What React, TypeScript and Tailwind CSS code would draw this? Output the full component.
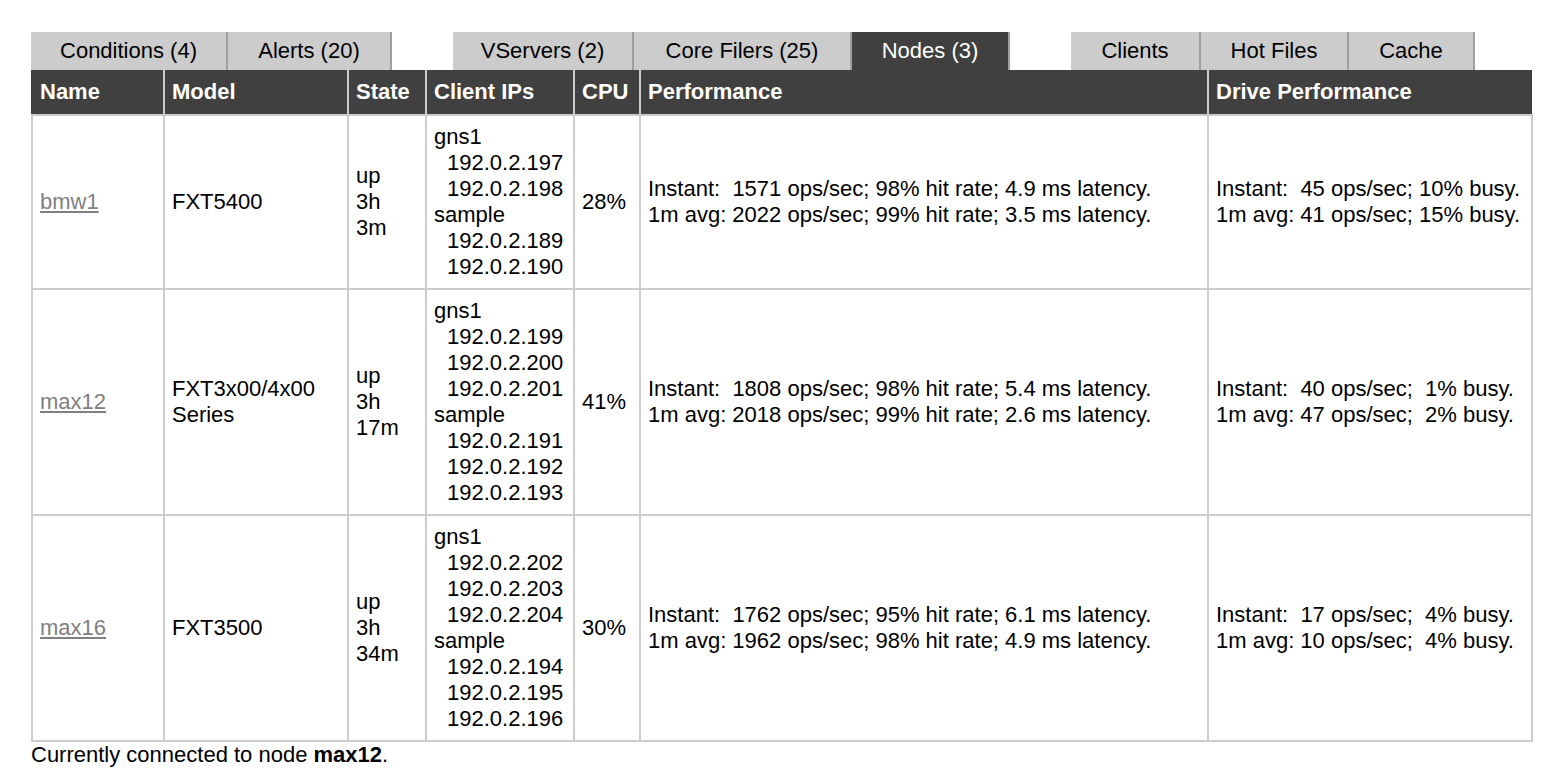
import React from 'react';

interface NodeRow {
  name: string;
  model: string[];
  state: string[];
  clients: { group: string; ips: string[] }[];
  cpu: string;
  perf: string[];
  drive: string[];
}

const TABS: { label: string; w: string; active?: boolean; gapBefore?: boolean }[] = [
  { label: 'Conditions (4)', w: 'w-[197px]' },
  { label: 'Alerts (20)', w: 'w-[164px]' },
  { label: 'VServers (2)', w: 'w-[181px]', gapBefore: true },
  { label: 'Core Filers (25)', w: 'w-[218px]' },
  { label: 'Nodes (3)', w: 'w-[158px]', active: true },
  { label: 'Clients', w: 'w-[130px]', gapBefore: true },
  { label: 'Hot Files', w: 'w-[148px]' },
  { label: 'Cache', w: 'w-[126px]' },
];

const NODES: NodeRow[] = [
  {
    name: 'bmw1',
    model: ['FXT5400'],
    state: ['up', '3h', '3m'],
    clients: [
      { group: 'gns1', ips: ['192.0.2.197', '192.0.2.198'] },
      { group: 'sample', ips: ['192.0.2.189', '192.0.2.190'] },
    ],
    cpu: '28%',
    perf: [
      'Instant:  1571 ops/sec; 98% hit rate; 4.9 ms latency.',
      '1m avg: 2022 ops/sec; 99% hit rate; 3.5 ms latency.',
    ],
    drive: ['Instant:  45 ops/sec; 10% busy.', '1m avg: 41 ops/sec; 15% busy.'],
  },
  {
    name: 'max12',
    model: ['FXT3x00/4x00', 'Series'],
    state: ['up', '3h', '17m'],
    clients: [
      { group: 'gns1', ips: ['192.0.2.199', '192.0.2.200', '192.0.2.201'] },
      { group: 'sample', ips: ['192.0.2.191', '192.0.2.192', '192.0.2.193'] },
    ],
    cpu: '41%',
    perf: [
      'Instant:  1808 ops/sec; 98% hit rate; 5.4 ms latency.',
      '1m avg: 2018 ops/sec; 99% hit rate; 2.6 ms latency.',
    ],
    drive: ['Instant:  40 ops/sec;  1% busy.', '1m avg: 47 ops/sec;  2% busy.'],
  },
  {
    name: 'max16',
    model: ['FXT3500'],
    state: ['up', '3h', '34m'],
    clients: [
      { group: 'gns1', ips: ['192.0.2.202', '192.0.2.203', '192.0.2.204'] },
      { group: 'sample', ips: ['192.0.2.194', '192.0.2.195', '192.0.2.196'] },
    ],
    cpu: '30%',
    perf: [
      'Instant:  1762 ops/sec; 95% hit rate; 6.1 ms latency.',
      '1m avg: 1962 ops/sec; 98% hit rate; 4.9 ms latency.',
    ],
    drive: ['Instant:  17 ops/sec;  4% busy.', '1m avg: 10 ops/sec;  4% busy.'],
  },
];

const HEADERS = ['Name', 'Model', 'State', 'Client IPs', 'CPU', 'Performance', 'Drive Performance'];
const COL_W = ['w-[132px]', 'w-[184px]', 'w-[78px]', 'w-[148px]', 'w-[66px]', 'w-[568px]', 'w-[324px]'];

const td = 'border-2 border-[#cccccc] px-[7px] py-[8px] align-middle whitespace-pre';

export default function App() {
  return (
    <div className="min-h-screen bg-white pl-[31px] pt-[32px] text-[22px] leading-[26px] text-black font-['Liberation_Sans',Arial,sans-serif]">
      {/* tab strip */}
      <div className="flex h-[38px]">
        {TABS.map(t => (
          <React.Fragment key={t.label}>
            {t.gapBefore && <div className="w-[61px]" />}
            <div
              className={`${t.w} flex items-center justify-center border-r-2 border-[#a0a0a0] ${
                t.active ? 'bg-[#404040] text-white' : 'bg-[#cccccc] text-black'
              }`}
            >
              {t.label}
            </div>
          </React.Fragment>
        ))}
      </div>

      <table className="w-[1500px] table-fixed border-collapse">
        <colgroup>
          {COL_W.map((w, i) => (
            <col key={i} className={w} />
          ))}
        </colgroup>
        <thead>
          <tr className="bg-[#404040]">
            {HEADERS.map((h, i) => (
              <th
                key={h}
                className={`border-b-2 border-b-[#cccccc] px-[7px] py-[9px] text-left font-bold text-white ${
                  i > 0 ? 'border-l-2 border-l-[#cccccc]' : 'border-l-2 border-l-[#404040]'
                }`}
              >
                {h}
              </th>
            ))}
          </tr>
        </thead>
        <tbody>
          {NODES.map(n => (
            <tr key={n.name}>
              <td className={td}>
                <a href="#" className="text-[#808080] underline">
                  {n.name}
                </a>
              </td>
              <td className={td}>
                {n.model.map(m => (
                  <div key={m}>{m}</div>
                ))}
              </td>
              <td className={td}>
                {n.state.map(s => (
                  <div key={s}>{s}</div>
                ))}
              </td>
              <td className={td}>
                {n.clients.map(c => (
                  <div key={c.group}>
                    <div>{c.group}</div>
                    {c.ips.map(ip => (
                      <div key={ip} className="pl-[13px]">
                        {ip}
                      </div>
                    ))}
                  </div>
                ))}
              </td>
              <td className={td}>{n.cpu}</td>
              <td className={td}>
                {n.perf.map(p => (
                  <div key={p}>{p}</div>
                ))}
              </td>
              <td className={td}>
                {n.drive.map(d => (
                  <div key={d}>{d}</div>
                ))}
              </td>
            </tr>
          ))}
        </tbody>
      </table>
      <p>
        Currently connected to node <b>max12</b>.
      </p>
    </div>
  );
}
